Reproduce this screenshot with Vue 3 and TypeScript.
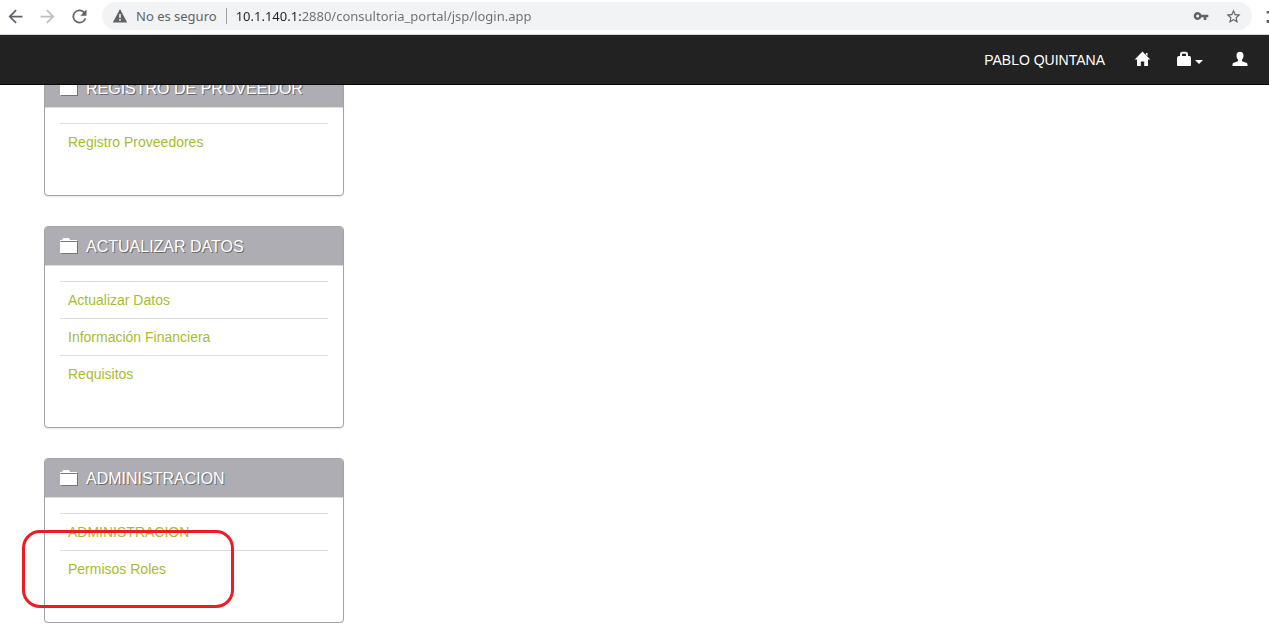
<script setup lang="ts">
import { ref } from 'vue'

interface MenuPanel {
  title: string
  links: string[]
  highlighted?: boolean
}

const address = ref('10.1.140.1:2880/consultoria_portal/jsp/login.app')

const panels: MenuPanel[] = [
  { title: 'REGISTRO DE PROVEEDOR', links: ['Registro Proveedores'] },
  { title: 'ACTUALIZAR DATOS', links: ['Actualizar Datos', 'Información Financiera', 'Requisitos'] },
  { title: 'ADMINISTRACION', links: ['ADMINISTRACION', 'Permisos Roles'], highlighted: true },
]
</script>

<template>
  <div class="window">
    <header class="toolbar">
      <div class="history">
        <button type="button" aria-label="Atrás">
          <svg viewBox="0 0 24 24"><path d="M20 11H7.8l5.6-5.6L12 4l-8 8 8 8 1.4-1.4L7.8 13H20z" /></svg>
        </button>
        <button type="button" class="dim" aria-label="Adelante">
          <svg viewBox="0 0 24 24"><path d="M4 11h12.2l-5.6-5.6L12 4l8 8-8 8-1.4-1.4 5.6-5.6H4z" /></svg>
        </button>
        <button type="button" aria-label="Recargar">
          <svg viewBox="0 0 24 24"><path d="M17.65 6.35A8 8 0 1 0 19.73 14h-2.08A6 6 0 1 1 12 6c1.66 0 3.14.69 4.22 1.78L13 11h7V4z" /></svg>
        </button>
      </div>
      <div class="omnibox">
        <button type="button" class="security">
          <svg viewBox="0 0 16 16"><path fill-rule="evenodd" d="M8 1 .8 14.5h14.4zM7.2 6h1.6v4H7.2zm0 5h1.6v1.7H7.2z" /></svg>
          No es seguro
        </button>
        <input v-model="address" class="address" type="text" aria-label="Dirección" spellcheck="false" />
        <button type="button" class="tool" aria-label="Contraseñas">
          <svg viewBox="0 0 24 24"><path fill-rule="evenodd" d="M12.65 10A6 6 0 1 0 12.65 14H16v4h4v-4h3v-4zM7 14.3a2.3 2.3 0 1 1 0-4.6 2.3 2.3 0 0 1 0 4.6z" /></svg>
        </button>
        <button type="button" class="tool star" aria-label="Favoritos">
          <svg viewBox="0 0 24 24"><path d="m22 9.24-7.19-.62L12 2 9.19 8.63 2 9.24l5.46 4.73L5.82 21 12 17.27 18.18 21l-1.63-7.03zM12 15.4l-3.76 2.27 1-4.28-3.32-2.88 4.38-.38L12 6.1l1.71 4.04 4.38.38-3.32 2.88 1 4.28z" /></svg>
        </button>
      </div>
      <svg class="extension" viewBox="0 0 3 12"><path d="M3 0H1.500Q.5 0 .5 1.500V2.500H3zM3 9H.5v1.500Q.5 12 2 12H3z" /></svg>
    </header>

    <nav class="navbar">
      <a href="#">PABLO QUINTANA</a>
      <a href="#" aria-label="Inicio">
        <svg class="glyph" viewBox="0 0 14 14"><path d="M7.500-1.500 15.300 6.500H13V13H9.200V8.500H5.800V13H2V6.500H-.3zM11 0h1.500v3L11 1.500z" /></svg>
      </a>
      <button type="button" class="bag" aria-label="Módulos">
        <svg class="glyph" viewBox="0 0 14 14"><path fill-rule="evenodd" d="M1 3V1Q1-1 3-1.200h4Q9-1 9 1v2h1.700Q12 3.400 12 4.800V12q0 1-1 1H-1q-1 0-1-1V4.800Q-1.800 3.400-.5 3zM3 3h4V1.400Q7 .8 6.400.8H3.600Q3 .8 3 1.400z" /></svg>
        <svg class="caret" viewBox="0 0 8 4"><path d="M0 0h8L4 4z" /></svg>
      </button>
      <a href="#" aria-label="Usuario">
        <svg class="glyph" viewBox="0 0 14 14"><path d="M7-1.200c2.200 0 3.500 1.400 3.500 3.500 0 1.800-.5 3.200-1.400 4.200-.4 1-.2 1.600.7 2l3.400 1.300c1 .4 1.300 1 1.300 2V13h-15v-1.200c0-1 .3-1.600 1.300-2l3.400-1.300c.9-.4 1.100-1 .7-2-.9-1-1.400-2.400-1.400-4.200C3.500.2 4.800-1.200 7-1.200z" /></svg>
      </a>
    </nav>

    <main class="content">
      <section v-for="panel in panels" :key="panel.title" class="panel">
        <h3 class="heading">
          <svg class="folder" viewBox="0 0 18 18"><path class="shade" d="M1 3h17v13H1z" /><path d="M0 4h17v11H0zM0 2h2l1-2h6l1 2h7v1H0z" /></svg>
          {{ panel.title }}
        </h3>
        <ul class="links">
          <li v-for="link in panel.links" :key="link"><a href="#">{{ link }}</a></li>
        </ul>
        <div v-if="panel.highlighted" class="marker"></div>
      </section>
    </main>
  </div>
</template>

<style>
body {
  margin: 0;
  background: #fff;
}
</style>

<style scoped>
.window {
  font-family: "Liberation Sans", Arial, sans-serif;
  font-size: 14px;
  line-height: 20px;
}
button {
  border: 0;
  padding: 0;
  background: none;
  color: inherit;
  font: inherit;
  cursor: pointer;
}
a {
  text-decoration: none;
}
svg {
  display: block;
  fill: currentColor;
  flex: none;
}
.toolbar {
  display: flex;
  align-items: flex-start;
  height: 32px;
  padding-top: 2px;
  border-bottom: 1px solid #d5d7da;
  background: #fff;
  color: #5f6368;
  font-family: "Noto Sans", "Open Sans", sans-serif;
  font-size: 13px;
}
.history {
  display: flex;
  gap: 11px;
  padding: 4px 12px 0 5px;
}
.history svg {
  width: 21px;
  height: 21px;
}
.dim {
  color: #bcbec1;
}
.omnibox {
  display: flex;
  flex: 1;
  align-items: center;
  height: 28px;
  padding: 0 10px;
  border-radius: 14px;
  background: #f1f3f4;
}
.security {
  display: flex;
  align-items: center;
  gap: 8px;
  height: 16px;
  padding-right: 9px;
  border-right: 1px solid #9aa0a6;
}
.security svg {
  width: 16px;
  height: 16px;
}
.address {
  flex: 1;
  min-width: 0;
  height: 24px;
  margin-left: 9px;
  padding: 0;
  border: 0;
  outline: 0;
  background: linear-gradient(90deg, #202124 65px, #6a6e73 65px);
  background-clip: text;
  -webkit-text-fill-color: transparent;
  font: inherit;
}
.tool svg {
  width: 16px;
  height: 16px;
}
.star {
  margin-left: 16px;
}
.star svg {
  width: 17px;
  height: 17px;
}
.extension {
  width: 3px;
  height: 12px;
  margin: 9px 0 0 14px;
}
.navbar {
  position: relative;
  z-index: 1;
  display: flex;
  justify-content: flex-end;
  padding-right: 7px;
  border-bottom: 1px solid #080808;
  background: #222;
  color: #fff;
}
.navbar a,
.bag {
  display: flex;
  align-items: center;
  height: 19px;
  padding: 15px;
  color: #fff;
}
.bag {
  box-sizing: content-box;
  gap: 2px;
}
.glyph {
  width: 14px;
  height: 14px;
  overflow: visible;
}
.caret {
  width: 8px;
  height: 4px;
  margin-top: 4px;
}
.content {
  display: flex;
  flex-direction: column;
  gap: 30px;
  max-width: 300px;
  margin: -17px 44px 0;
}
.panel {
  position: relative;
  border: 1px solid #a4a4a6;
  border-radius: 4px;
  background: #fff;
  box-shadow: 0 1px 1px rgba(0, 0, 0, 0.1);
}
.heading {
  display: flex;
  align-items: center;
  gap: 8px;
  margin: 0;
  padding: 11px 15px 9px;
  border-bottom: 1px solid #ddd;
  border-radius: 3px 3px 0 0;
  background: #aeadb3;
  color: #fff;
  font-size: 16px;
  font-weight: 400;
  line-height: 18px;
  text-shadow: 1px 1px #6b6b6b;
}
.folder {
  width: 18px;
  height: 18px;
}
.shade {
  fill: #77757a;
}
.links {
  margin: 0;
  padding: 15px 15px 35px;
  list-style: none;
}
.links li {
  padding: 8px;
  border-top: 1px solid #ddd;
}
.links a {
  color: #a9bb31;
}
.marker {
  position: absolute;
  top: 71px;
  left: -23px;
  width: 206px;
  height: 72px;
  border: 3px solid #ed1c24;
  border-radius: 18px;
  pointer-events: none;
}
</style>
